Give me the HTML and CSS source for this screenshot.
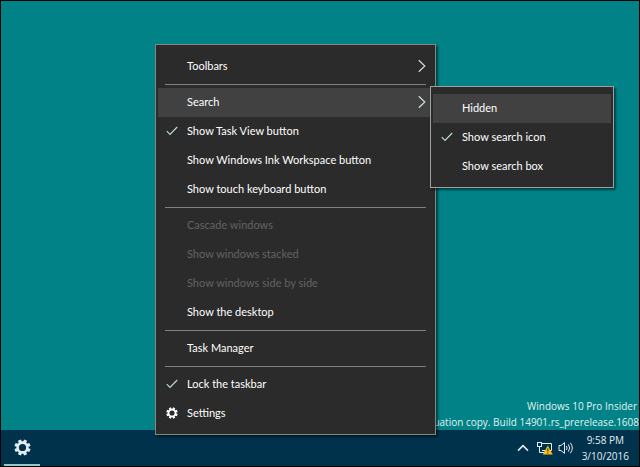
FILE: index.html
```html
<!DOCTYPE html>
<html lang="en">
<head>
    <meta charset="UTF-8">
    <meta name="viewport" content="width=device-width, initial-scale=1.0">
    <title>Desktop</title>
    <link rel="stylesheet" href="styles.css">
</head>
<body>
    <svg class="symbols" aria-hidden="true">
        <symbol id="check" viewBox="0 0 12 10">
            <path d="M0.8 5.2 L4 8.4 L11.2 1" fill="none" stroke="currentColor" stroke-width="1.1"/>
        </symbol>
        <symbol id="arrow" viewBox="0 0 8 14">
            <path d="M0.8 1.2 L6.8 7 L0.8 12.8" fill="none" stroke="currentColor" stroke-width="1.2"/>
        </symbol>
        <symbol id="gear" viewBox="0 0 24 24">
            <circle cx="12" cy="12" r="6.9" fill="none" stroke="currentColor" stroke-width="3.6"/>
            <g stroke="currentColor" stroke-width="4.6">
                <path d="M12 0.6 V5 M12 19 V23.4 M0.6 12 H5 M19 12 H23.4" transform="rotate(22.5 12 12)"/>
                <path d="M12 0.6 V5 M12 19 V23.4 M0.6 12 H5 M19 12 H23.4" transform="rotate(67.5 12 12)"/>
            </g>
        </symbol>
    </svg>

    <div class="screen">
        <main class="desktop">
            <div class="watermark">
                <p class="edition">Windows 10 Pro Insider</p>
                <p>Evaluation copy. Build 14901.rs_prerelease.1608</p>
            </div>
        </main>

        <footer class="taskbar">
            <button class="task-button" aria-label="Settings">
                <svg class="task-gear"><use href="#gear"/></svg>
            </button>
            <div class="tray">
                <button class="tray-button" aria-label="Show hidden icons">
                    <svg width="12" height="8" viewBox="0 0 12 8">
                        <path d="M1 6.6 L6 1.6 L11 6.6" fill="none" stroke="currentColor" stroke-width="1.5"/>
                    </svg>
                </button>
                <button class="tray-button" aria-label="Network">
                    <svg width="16" height="14" viewBox="0 0 16 14">
                        <path d="M5 2.5 H14.5 V9.5 H5 M2.5 5.5 V11.5 H9" fill="none" stroke="currentColor"/>
                        <rect x="0.5" y="1.5" width="4" height="4" fill="#00324c" stroke="currentColor"/>
                        <path d="M10.7 4.6 L15.8 13.4 H5.8 Z" fill="#f7bd16"/>
                        <path d="M10.8 7.6 V10.6 M10.8 11.4 V12.4" stroke="#3a3010" stroke-width="1.1"/>
                    </svg>
                </button>
                <button class="tray-button" aria-label="Volume">
                    <svg width="16" height="14" viewBox="0 0 16 14">
                        <path d="M1 4.5 H3 L6.5 1.6 V12.4 L3 9.5 H1 Z" fill="none" stroke="currentColor"/>
                        <path d="M8.4 5 Q9.8 7 8.4 9 M10.4 3.4 Q12.9 7 10.4 10.6 M12.4 1.8 Q16.2 7 12.4 12.2" fill="none" stroke="currentColor"/>
                    </svg>
                </button>
                <button class="clock">
                    <span>9:58 PM</span>
                    <span>3/10/2016</span>
                </button>
            </div>
        </footer>

        <div class="menu taskbar-menu" role="menu">
            <button class="menu-item" role="menuitem">
                <span class="label">Toolbars</span>
                <svg class="arrow"><use href="#arrow"/></svg>
            </button>
            <hr>
            <button class="menu-item active" role="menuitem">
                <span class="label">Search</span>
                <svg class="arrow"><use href="#arrow"/></svg>
            </button>
            <button class="menu-item" role="menuitemcheckbox" aria-checked="true">
                <svg class="check"><use href="#check"/></svg>
                <span class="label">Show Task View button</span>
            </button>
            <button class="menu-item" role="menuitem"><span class="label">Show Windows Ink Workspace button</span></button>
            <button class="menu-item" role="menuitem"><span class="label">Show touch keyboard button</span></button>
            <hr>
            <button class="menu-item" role="menuitem" disabled><span class="label">Cascade windows</span></button>
            <button class="menu-item" role="menuitem" disabled><span class="label">Show windows stacked</span></button>
            <button class="menu-item" role="menuitem" disabled><span class="label">Show windows side by side</span></button>
            <button class="menu-item" role="menuitem"><span class="label">Show the desktop</span></button>
            <hr>
            <button class="menu-item" role="menuitem"><span class="label">Task Manager</span></button>
            <hr>
            <button class="menu-item" role="menuitemcheckbox" aria-checked="true">
                <svg class="check"><use href="#check"/></svg>
                <span class="label">Lock the taskbar</span>
            </button>
            <button class="menu-item" role="menuitem">
                <svg class="item-gear"><use href="#gear"/></svg>
                <span class="label">Settings</span>
            </button>
        </div>

        <div class="menu search-menu" role="menu">
            <button class="menu-item active" role="menuitem"><span class="label">Hidden</span></button>
            <button class="menu-item" role="menuitemcheckbox" aria-checked="true">
                <svg class="check"><use href="#check"/></svg>
                <span class="label">Show search icon</span>
            </button>
            <button class="menu-item" role="menuitem"><span class="label">Show search box</span></button>
        </div>
    </div>
</body>
</html>
```
FILE: styles.css
```css
* {
    margin: 0;
    padding: 0;
    box-sizing: border-box;
}

body {
    background-color: #000;
    font-family: "Open Sans", "Noto Sans", sans-serif;
    font-size: 10px;
    color: #fff;
}

button {
    font: inherit;
    color: inherit;
    background: none;
    border: none;
}

.symbols {
    display: none;
}

.screen {
    position: relative;
    display: flex;
    flex-direction: column;
    min-height: 100vh;
    border: 1px solid #000;
    overflow: hidden;
}

.desktop {
    flex: 1;
    display: flex;
    justify-content: flex-end;
    align-items: flex-end;
    background-color: #008287;
}

.watermark {
    text-align: right;
    line-height: 16px;
    color: #e2f2f2;
}

.edition {
    padding-right: 2px;
}

/* Taskbar */
.taskbar {
    display: flex;
    justify-content: space-between;
    height: 36px;
    background-color: #00324c;
    color: #e4ecf0;
}

.task-button {
    display: flex;
    justify-content: center;
    align-items: center;
    width: 36px;
    margin-left: 3px;
    border-bottom: 2px solid #8fc9c9;
}

.task-gear {
    width: 17px;
    height: 17px;
}

.tray {
    display: flex;
    align-items: center;
    padding-right: 10px;
}

.tray-button {
    display: flex;
    margin-right: 5px;
}

.tray-button:first-child {
    margin-right: 8px;
}

.clock {
    display: flex;
    flex-direction: column;
    align-items: center;
    line-height: 16px;
    margin-left: 3px;
}

/* Context menus */
.menu {
    position: absolute;
    padding: 7px 2px 6px;
    font-family: Lato, "Open Sans", sans-serif;
    font-size: 11px;
    background-color: #2b2b2b;
    border: 1px solid #858585;
    box-shadow: 2px 2px 2px rgba(0, 0, 0, 0.5);
}

.taskbar-menu {
    left: 154px;
    top: 43px;
    width: 281px;
}

.search-menu {
    left: 429px;
    top: 85px;
    width: 184px;
    border-color: #a0a0a0;
}

.menu-item {
    display: grid;
    grid-template-columns: 29px 1fr 15px;
    align-items: center;
    width: 100%;
    height: 29px;
    padding-bottom: 2px;
    text-align: left;
}

.menu-item .label {
    grid-column: 2;
}

.menu-item.active {
    background-color: #414141;
}

.menu-item:disabled {
    color: #636363;
}

.menu hr {
    height: 1px;
    margin: 3px 7px;
    border: none;
    background-color: #808080;
}

.check {
    width: 12px;
    height: 10px;
    margin-left: 8px;
    color: #c4dcdc;
}

.arrow {
    width: 8px;
    height: 14px;
    color: #d0dede;
}

.item-gear {
    width: 12px;
    height: 12px;
    margin-left: 8px;
}
```
